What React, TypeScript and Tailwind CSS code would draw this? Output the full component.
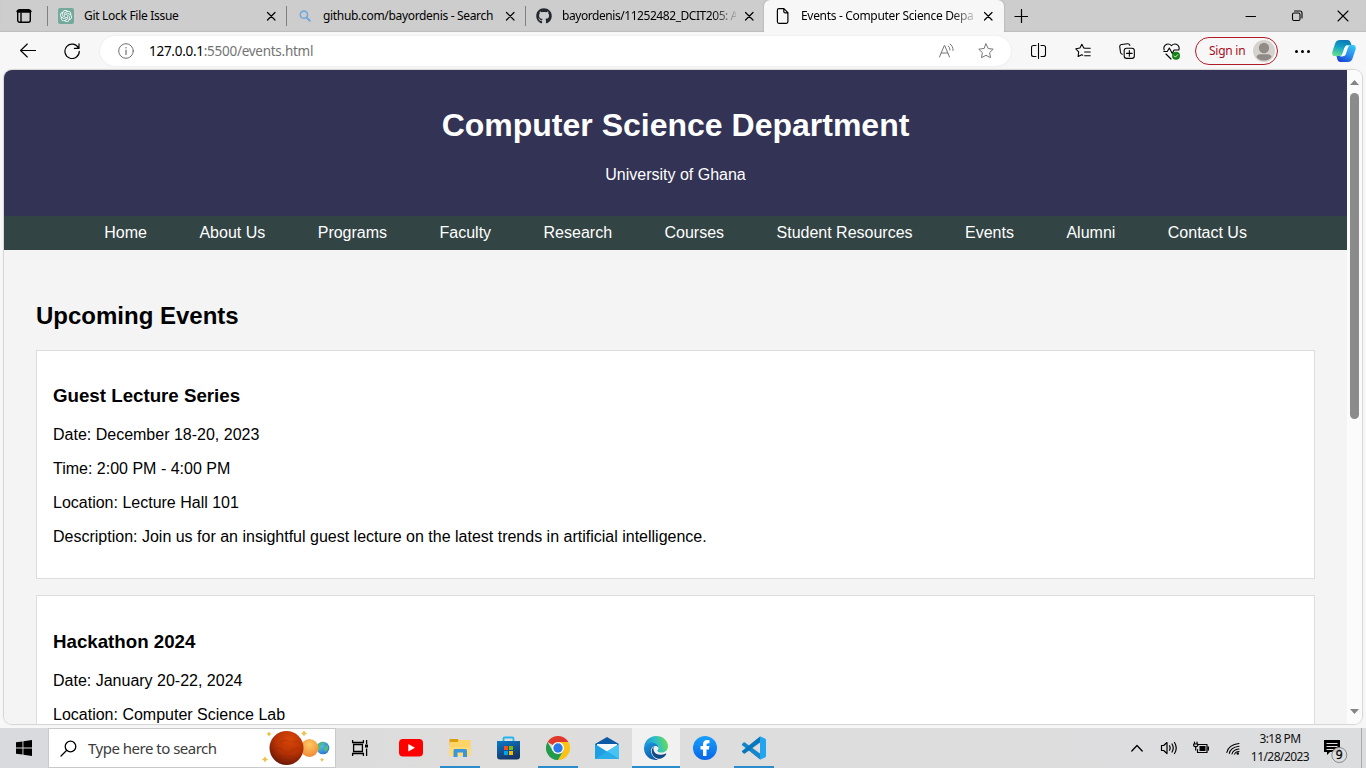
import type { ReactNode } from "react";
import { SiOpenai } from "react-icons/si";
import { FaGithub } from "react-icons/fa";

const links = ["Home", "About Us", "Programs", "Faculty", "Research", "Courses", "Student Resources", "Events", "Alumni", "Contact Us"];

type EventItem = { title: string; lines: string[] };
const events: EventItem[] = [
  {
    title: "Guest Lecture Series",
    lines: [
      "Date: December 18-20, 2023",
      "Time: 2:00 PM - 4:00 PM",
      "Location: Lecture Hall 101",
      "Description: Join us for an insightful guest lecture on the latest trends in artificial intelligence.",
    ],
  },
  {
    title: "Hackathon 2024",
    lines: ["Date: January 20-22, 2024", "Location: Computer Science Lab"],
  },
];

function Icon({ size = 16, w = 1, children, box }: { size?: number; w?: number; children: ReactNode; box?: string }) {
  return (
    <svg width={size} height={size} viewBox={box ?? `0 0 ${size} ${size}`} fill="none" stroke="currentColor" strokeWidth={w} strokeLinecap="round" strokeLinejoin="round" className="block shrink-0">
      {children}
    </svg>
  );
}

function Close() {
  return (
    <Icon size={10} w={1.2}>
      <path d="M1.500 1.500l7.500 7.500M9 1.500l-7.500 7.500" />
    </Icon>
  );
}

function Tab({ icon, title, active, fade, tracking }: { icon: ReactNode; title: string; active?: boolean; fade?: boolean; tracking: string }) {
  return (
    <div className={`flex h-8 shrink-0 items-center ${active ? "w-60 rounded-t-md bg-[#f7f7f7] pl-[11px] pr-[11px] shadow-[0_0_2px_#999]" : "w-[238px] pl-[10px] pr-[10px]"}`}>
      <div className="flex w-4 shrink-0 justify-center">{icon}</div>
      <div className={`ml-[10px] w-[174px] whitespace-nowrap text-[12px] leading-[18px] ${tracking} ${fade ? "[mask-image:linear-gradient(to_right,black_150px,transparent_178px)]" : ""}`}>{title}</div>
      <div className="ml-auto">
        <Close />
      </div>
    </div>
  );
}

const Sep = () => <div className="h-5 w-px shrink-0 bg-[#808080]" />;

function TabStrip() {
  return (
    <div className="flex h-8 items-center bg-[#cdcdcd] shadow-[inset_0_-1px_1px_#bdbdbd]">
      <div className="flex w-[47px] shrink-0 justify-center">
        <Icon size={16} w={1.4}>
          <rect x="1.7" y="1.7" width="12.6" height="12.6" rx="2" />
          <path d="M2 3.2h12" strokeWidth="3" />
          <path d="M5 5v9" />
        </Icon>
      </div>
      <Sep />
      <Tab
        title="Git Lock File Issue"
        tracking="tracking-[-0.3px]"
        icon={
          <div className="flex size-4 items-center justify-center rounded-[2px] bg-[#74aa9c]">
            <SiOpenai size={12} color="white" />
          </div>
        }
      />
      <Sep />
      <Tab
        title="github.com/bayordenis - Search"
        tracking="tracking-[-0.32px]"
        icon={
          <Icon size={16} w={1.6}>
            <g stroke="#72a8dc">
              <circle cx="6.9" cy="6.7" r="3.6" />
              <path d="M9.6 9.5l3.2 3.2" strokeWidth="2" />
            </g>
          </Icon>
        }
      />
      <Sep />
      <Tab title="bayordenis/11252482_DCIT205: A" fade tracking="tracking-[-0.44px]" icon={<FaGithub size={16} color="#24292f" />} />
      <Tab
        active
        fade
        title="Events - Computer Science Depa"
        tracking="tracking-[-0.32px]"
        icon={
          <Icon size={16} w={1.2}>
            <path d="M3.900.7h5l4 4v9.100q0 1.500-1.500 1.500H3.900q-1.500 0-1.500-1.500V2.200Q2.400.7 3.900.7zM8.800.9v2.500q0 1.500 1.500 1.500h2.400" />
          </Icon>
        }
      />
      <div className="flex w-[34px] justify-center">
        <Icon size={14} w={1.2}>
          <path d="M7.500.5v13.500M1 7.500h13" />
        </Icon>
      </div>
      <div className="ml-auto flex">
        <div className="flex w-[46px] justify-center">
          <Icon size={12}>
            <path d="M1 6.500h9.500" />
          </Icon>
        </div>
        <div className="flex w-[46px] justify-center">
          <Icon size={12} w={1.1}>
            <rect x="1.500" y="3" width="7.500" height="7.500" rx="1.500" />
            <path d="M3.500 1h5.500q2 0 2 2v5" />
          </Icon>
        </div>
        <div className="flex w-[46px] justify-center">
          <Icon size={12} w={1.1}>
            <path d="M1 1l10 10M11 1L1 11" />
          </Icon>
        </div>
      </div>
    </div>
  );
}

const star = "M8 .9l2.200 4.600 5 .7-3.600 3.500.9 5L8 12.300l-4.500 2.400.9-5L.8 6.200l5-.7z";

function Slot({ children }: { children: ReactNode }) {
  return <div className="flex w-11 shrink-0 justify-center">{children}</div>;
}

function Toolbar() {
  return (
    <div className="flex h-[38px] items-center bg-[#f7f7f7] pl-[6px]">
      <Slot>
        <Icon size={16} w={1.1}>
          <path d="M15.500 7.500H.8M7.300 1l-6.700 6.500 6.700 6.500" />
        </Icon>
      </Slot>
      <Slot>
        <Icon size={16} w={1.2}>
          <path d="M14.600 5.200A7.200 7.200 0 1 0 15.300 8.300M15 .8v4.600h-4.600" />
        </Icon>
      </Slot>
      <div className="ml-[6px] flex h-[30px] w-[911px] shrink-0 items-center rounded-full bg-white pl-[18px] pr-[17px] shadow-[0_0_2px_#e0e0e0]">
        <span className="text-[#707070]">
          <Icon size={16}>
            <circle cx="8" cy="8" r="7.300" />
            <path d="M8 7v4.500" strokeWidth="1.200" />
            <circle cx="8" cy="4.800" r=".7" fill="currentColor" stroke="none" />
          </Icon>
        </span>
        <div className="ml-[15px] whitespace-nowrap text-[13.500px] tracking-[-0.27px] text-[#737373]">
          <span className="text-black">127.0.0.1</span>:5500/events.html
        </div>
        <div className="ml-auto flex items-center gap-6 text-[#757575]">
          <Icon size={16}>
            <path d="M1.500 14L6.300 2.500h.4L11.500 14M3.200 10h6.600M10.200 3q2 1.400 1.800 4M12 1q3.400 2.200 3 6.500" />
          </Icon>
          <Icon size={16}>
            <path d={star} />
          </Icon>
        </div>
      </div>
      <div className="w-[6px] shrink-0" />
      <Slot>
        <Icon size={16} w={1.1}>
          <path d="M5 2.500H2.500q-2 0-2 2v7q0 2 2 2H5M10 2.500h2.500q2 0 2 2v7q0 2-2 2H10M7.500.5v15" />
        </Icon>
      </Slot>
      <Slot>
        <Icon size={16} w={1.15} box="0 0 17 17">
          <path d="M10.500 5.500L9.300 5.200 7.300 1.300 5.200 5.300.9 6.200l3 3.200-.6 5 3.900-2 1 .5M10.500 5.500h5.700M10.200 9.500h6M10.200 13.500h6" />
        </Icon>
      </Slot>
      <Slot>
        <Icon size={16} w={1.15} box="0 0 17 17">
          <rect x="5.500" y="5.500" width="10.800" height="10.800" rx="2.500" />
          <path d="M11 8v6M8 11h6M3.500 12Q1.700 11.500 1.500 9.500L.8 4q-.2-2 1.800-2.400L9 .8q2-.2 2.500 1.800" />
        </Icon>
      </Slot>
      <Slot>
        <Icon size={17} w={1.100}>
          <path d="M1.200 7Q.2 4 2.200 2.200q3.200-2.600 6.300.4 3.200-3 6.300-.4 2 2 1 4.800M.8 8.500h3.500l2-3.500 3 5.500 1.700-3.500h4.500M3 11l5 5" />
          <circle cx="13" cy="12.800" r="4" fill="#138213" stroke="none" />
          <path d="M11.200 12.900l1.200 1.200 2.300-2.400" stroke="white" strokeWidth=".9" />
        </Icon>
      </Slot>
      <div className="ml-[2px] flex h-7 w-[83px] shrink-0 items-center justify-between rounded-full border border-[#b11c28] pl-[13px] pr-[2px] text-[#a80f1a]">
        <span className="whitespace-nowrap text-[12px] tracking-[-0.25px]">Sign in</span>
        <svg width="22" height="22" viewBox="0 0 22 22">
          <circle cx="11" cy="11" r="11" fill="#d5d2ce" />
          <circle cx="11" cy="8" r="5.200" fill="#918b87" />
          <path d="M3.300 17q1-2.700 3.500-2.700h8.400q2.500 0 3.500 2.700a10 10 0 0 1-15.400 0z" fill="#918b87" />
        </svg>
      </div>
      <div className="ml-[2px] flex w-11 shrink-0 items-center justify-center gap-[3px]">
        <i className="size-[3px] rounded-full bg-black" />
        <i className="size-[3px] rounded-full bg-black" />
        <i className="size-[3px] rounded-full bg-black" />
      </div>
      <div className="flex w-10 shrink-0 justify-center">
        <svg width="24" height="24" viewBox="0 0 24 24">
          <defs>
            <linearGradient id="cp1" x1="0.600" y1="0" x2="0.300" y2="1">
              <stop offset="0" stopColor="#0a78b4" />
              <stop offset=".45" stopColor="#12a3c8" />
              <stop offset="1" stopColor="#63dd8e" />
            </linearGradient>
            <linearGradient id="cp2" x1="0.800" y1="0" x2="0.200" y2="1">
              <stop offset="0" stopColor="#35c5f4" />
              <stop offset=".5" stopColor="#2b8cee" />
              <stop offset="1" stopColor="#1440d4" />
            </linearGradient>
          </defs>
          <path d="M8 1h7.500q2.200 0 3 2.300L19.500 6h-4q-1.700 0-2.300 2l-2.500 6.500Q10 17 7.500 17H3Q-.5 17 .4 12.500L3.300 4Q4.500 1 8 1z" fill="url(#cp1)" />
          <path d="M16 23H8.500q-2.200 0-3-2.300L4.500 17h4q2 0 2.700-2.500l2-6.500q.6-2 2.300-2H21q3.500.2 2.600 4.500L20.700 19q-1.200 4-4.700 4z" fill="url(#cp2)" />
          <path d="M14.500 6.500h3.400q-1.500.8-2 2.500l-2.200 6.500Q13 17.500 8 17.500q1.900-.7 2.500-3l1.800-5.500q.6-2 2.200-2.500z" fill="#f5fbff" />
        </svg>
      </div>
    </div>
  );
}

function Scrollbar() {
  return (
    <div className="flex w-[15px] shrink-0 flex-col items-center bg-[#fbfbfb]">
      <svg width="9" height="5" viewBox="0 0 9 5" className="mt-[10px]">
        <path d="M4.500 0L9 5H0z" fill="#858585" />
      </svg>
      <div className="mt-2 h-[326px] w-[9px] rounded-full bg-[#8b8b8b]" />
      <svg width="9" height="5" viewBox="0 0 9 5" className="mb-[10px] mt-auto">
        <path d="M4.500 5L9 0H0z" fill="#858585" />
      </svg>
    </div>
  );
}

function Page() {
  return (
    <div className="flex-1 overflow-hidden bg-[#f4f4f4] font-['Liberation_Sans',Arial,sans-serif] text-[16px] leading-[18px] text-black">
      <header className="h-[145.880px] bg-[#333355] pt-[37.440px] text-center text-white">
        <h1 className="text-[32px] font-bold leading-[37px]">Computer Science Department</h1>
        <p className="mt-[21.440px]">University of Ghana</p>
      </header>
      <nav className="flex h-[34px] items-center justify-between bg-[#334444] pl-[100.300px] pr-[100px] text-white">
        {links.map((l) => (
          <a key={l}>{l}</a>
        ))}
      </nav>
      <main className="px-8 pt-[51.920px]">
        <h2 className="mb-[19.920px] text-[24px] font-bold leading-7">Upcoming Events</h2>
        {events.map((e) => (
          <section key={e.title} className="mb-4 border border-[#dddddd] bg-white px-4 pb-8 pt-[34.720px]">
            <h3 className="mb-[18.720px] text-[18.720px] font-bold leading-[22px]">{e.title}</h3>
            <div className="flex flex-col gap-4">
              {e.lines.map((t) => (
                <p key={t}>{t}</p>
              ))}
            </div>
          </section>
        ))}
      </main>
    </div>
  );
}

function Task({ children, line, active }: { children: ReactNode; line?: boolean; active?: boolean }) {
  return (
    <div className={`flex w-12 shrink-0 flex-col items-center ${active ? "bg-[#f1f1f2]" : ""}`}>
      <div className="flex flex-1 items-center justify-center">{children}</div>
      <div className={`-mt-[2px] h-[2px] ${active ? "w-12" : "w-10"} ${line ? "bg-[#2a8ccb]" : ""}`} />
    </div>
  );
}

function Planets() {
  return (
    <svg width="70" height="36" viewBox="0 0 70 36" className="shrink-0">
      <defs>
        <radialGradient id="mars" cx=".6" cy=".25" r=".8">
          <stop offset="0" stopColor="#d94708" />
          <stop offset=".55" stopColor="#b53205" />
          <stop offset="1" stopColor="#641506" />
        </radialGradient>
        <radialGradient id="venus" cx=".5" cy=".3" r=".8">
          <stop offset="0" stopColor="#ffc862" />
          <stop offset="1" stopColor="#ec8130" />
        </radialGradient>
        <radialGradient id="earth" cx=".3" cy=".3" r=".8">
          <stop offset="0" stopColor="#55c6ef" />
          <stop offset="1" stopColor="#2a74cc" />
        </radialGradient>
      </defs>
      <circle cx="61" cy="18" r="6.300" fill="url(#earth)" />
      <path d="M56 14q3-3 6-2l-1 3-3 1 1 3-3 2q-2-4 0-7zM62 17l4-2q1 4-2 7l-2-2z" fill="#50b984" />
      <circle cx="47.500" cy="18" r="9" fill="url(#venus)" />
      <circle cx="24.500" cy="18" r="17" fill="url(#mars)" />
      <path d="M18 13q3-4 8-2t10 0M11 20q6-4 9 0t7 2 9-4M16 28q8-5 14-1" stroke="#8f2508" strokeOpacity=".25" strokeWidth="1.200" fill="none" />
      <g fill="#edc24b">
        <path d="M7 1.500l1 1.500 1.500 1L8 5 7 6.500 6 5 4.500 4 6 3zM42 .3l1.100 2 2 1.100-2 1.100-1.100 2-1.100-2-2-1.100 2-1.100zM3 26.300l1.100 2 2 1.100-2 1.100-1.100 2-1.100-2-2-1.100 2-1.100zM60 27.500l.8 1.500 1.500.8-1.500.8-.8 1.500-.8-1.500-1.500-.8 1.500-.8z" />
      </g>
    </svg>
  );
}

function Taskbar() {
  return (
    <div className="flex h-10 bg-gradient-to-r from-[#d8dadd] via-[#dedddc] via-35% to-[#dcdddf]">
      <div className="flex w-12 shrink-0 items-center justify-center">
        <svg width="16" height="16" viewBox="0 0 16 16">
          <path d="M0 2.300L6.500 1.400V7.500H0zM7.400 1.200L16 0V7.500H7.400zM0 8.500h6.500v6.100L0 13.700zM7.400 8.500H16V16l-8.600-1.200z" />
        </svg>
      </div>
      <div className="flex w-[288px] shrink-0 items-center border border-[#c8c9ca] bg-white pl-[11px] pr-[3px]">
        <Icon size={17} w={1.300}>
          <circle cx="10.500" cy="6.500" r="5.300" />
          <path d="M6.500 10.500L1 16" />
        </Icon>
        <span className="ml-[11px] flex-1 whitespace-nowrap text-[15px] tracking-[-0.5px] text-[#3c3c3c]">Type here to search</span>
        <Planets />
      </div>
      <div className="flex gap-px">
        <Task>
          <Icon size={18} w={1.300} box="0 0 18 18">
            <g strokeLinecap="butt" strokeLinejoin="miter">
              <path d="M1.600 1v2.500h10.800V1M1.600 17v-2.500h10.800V17M2.600 5.500h8.800v7H2.600zM15.600 1v4M15.600 9.500V17" />
              <path d="M14 5.500h3v3h-3z" fill="currentColor" stroke="none" />
            </g>
          </Icon>
        </Task>
        <div className="w-px" />
        <Task>
          <svg width="24" height="18" viewBox="0 0 24 18">
            <rect width="24" height="17.500" rx="4" fill="#ff0000" />
            <path d="M9.300 5l6.700 3.700-6.700 3.700z" fill="white" />
          </svg>
        </Task>
        <Task line>
          <svg width="22" height="18" viewBox="0 0 22 18">
            <path d="M.5 0h8l1.500 1.500V6H.5z" fill="#dd9c0a" />
            <path d="M.5 3h8L10 1h11.500v16H.5z" fill="#ffd466" />
            <path d="M.5 8h21v9H.5z" fill="#ffda75" />
            <path d="M4.500 18v-6.500q0-1.500 1.500-1.500h10.500q1.500 0 1.500 1.500V18H14v-4.500H8.500V18z" fill="#3a96dc" />
          </svg>
        </Task>
        <Task>
          <svg width="24" height="24" viewBox="0 0 24 24">
            <defs>
              <linearGradient id="store" x1="0" y1="0" x2=".4" y2="1">
                <stop stopColor="#087acb" />
                <stop offset="1" stopColor="#173866" />
              </linearGradient>
            </defs>
            <path d="M6.500 6V2.500q0-1 1-1h8q1 0 1 1V6" fill="none" stroke="#23b6ef" strokeWidth="1.800" />
            <path d="M0 5h23v15.500q0 3-3 3H3q-3 0-3-3z" fill="url(#store)" />
            <path d="M7 10h4v4H7z" fill="#f25022" />
            <path d="M12 10h4v4h-4z" fill="#7fba00" />
            <path d="M7 15h4v4H7z" fill="#00a4ef" />
            <path d="M12 15h4v4h-4z" fill="#ffb900" />
          </svg>
        </Task>
        <Task line>
          <svg width="24" height="24" viewBox="0 0 24 24">
            <path d="M12 12L1.600 6A12 12 0 0 1 22.400 6z" fill="#e0392b" />
            <path d="M12 12L22.400 6A12 12 0 0 1 12 24L17.200 15z" fill="#fbc116" />
            <path d="M12 12l5.200 3L12 24A12 12 0 0 1 1.600 6L6.800 15z" fill="#249a4c" />
            <path d="M12 6h10.400L17 15z" fill="#fbc116" />
            <circle cx="12" cy="12" r="6" fill="white" />
            <circle cx="12" cy="12" r="4.700" fill="#2c7aea" />
          </svg>
        </Task>
        <Task>
          <svg width="24" height="24" viewBox="0 0 24 24">
            <path d="M0 8l12-7 12 7v4H0z" fill="#0c5aa6" />
            <path d="M2 8h20v8H2z" fill="#f5f9fd" />
            <path d="M0 8l12 7.500L24 8v15H0z" fill="#1f9fe0" />
            <path d="M24 8v15L12 15.500z" fill="#45c4f3" />
            <path d="M0 23l12-7.500L24 23z" fill="#29aee9" />
          </svg>
        </Task>
        <Task line active>
          <svg width="24" height="24" viewBox="0 0 24 24">
            <defs>
              <linearGradient id="eg1" x1="0" y1=".5" x2="1" y2=".3">
                <stop stopColor="#1b92d6" />
                <stop offset=".5" stopColor="#2cbfcb" />
                <stop offset="1" stopColor="#6bde4b" />
              </linearGradient>
              <linearGradient id="eg2" x1="0" y1="0" x2=".5" y2="1">
                <stop stopColor="#1d9be2" />
                <stop offset="1" stopColor="#0b5ba7" />
              </linearGradient>
            </defs>
            <path d="M0 11.500C.5 5 5.500 0 12 0c7.500 0 12 5 12 10.200 0 4-3 6.300-6.500 6.300-3 0-4.200-1-4.200-1.800 0-.8 1.200-1 1.200-3C14.500 9.500 12 7.500 8.500 7.500 4.500 7.500 1 9 0 11.500z" fill="url(#eg1)" />
            <path d="M0 11.500C1 8.500 4.500 6.500 8.500 6.800c3.500.2 6 2.500 6 5-1-1.500-2.500-2-4-1.600-2.500.6-4 3-3.300 6.300.8 3.500 3.300 6.300 7 7.200C6 25.500-.5 19 0 11.500z" fill="url(#eg2)" />
            <path d="M10 10.500c-2 1.500-2.700 4-2 6.500 1.200 4.200 5 6.500 9 5.500 2.400-.8 4.300-2.300 5.300-4.200.3-.7-.3-1-1-.6-4.500 2.200-9.500 1-11.200-2.200-.8-1.600-.9-3.300-.1-5z" fill="#104a86" />
          </svg>
        </Task>
        <Task>
          <svg width="24" height="24" viewBox="0 0 24 24">
            <defs>
              <linearGradient id="fb" x1="0" y1="0" x2="0" y2="1">
                <stop stopColor="#18a0fb" />
                <stop offset="1" stopColor="#0866e8" />
              </linearGradient>
            </defs>
            <circle cx="12" cy="12" r="12" fill="url(#fb)" />
            <path d="M10 20v-6.500H7.500V10H10V8.500C10 5.500 11.500 4 14 4q1.500 0 2.500.3v3h-1.400Q13.500 7.300 13.500 9v1h2.900l-.5 3.500h-2.400V20z" fill="white" />
          </svg>
        </Task>
        <Task line>
          <svg width="24" height="24" viewBox="0 0 24 24">
            <path d="M0 8l1.800-1.500q.5-.4 1.100 0L18 17.500v6L.2 9.200Q-.5 8.500 0 8z" fill="#1685cc" />
            <path d="M0 16l1.800 1.500q.5.400 1.100 0L18 6.500v-6L.2 14.800Q-.5 15.500 0 16z" fill="#0878bd" />
            <path d="M18 .2l5 2.400q1 .5 1 1.600v15.600q0 1.100-1 1.600l-5 2.400z" fill="#22a5f1" />
          </svg>
        </Task>
      </div>
      <div className="ml-auto flex items-center">
        <div className="flex w-8 justify-center">
          <Icon size={12} w={1.300}>
            <path d="M.8 9L6 3.500 11.200 9" />
          </Icon>
        </div>
        <div className="flex w-8 justify-center">
          <Icon size={18} w={1.200} box="0 0 18 18">
            <path d="M1.500 6.500v5h2.200L7 14.500v-11L3.700 6.500zM9.500 6.800q1.300 2.200 0 4.400M12 5q2.500 4 0 8M14.500 3.500q3.500 5.500 0 11" />
          </Icon>
        </div>
        <div className="flex w-8 justify-center">
          <Icon size={16} w={1.200} box="0 0 16 16">
            <path d="M5 4.500h9v8H4.500V9.500" />
            <path d="M6.500 6h6v5h-6zM14.500 6.500h1.500v4h-1.500z" fill="currentColor" stroke="none" />
            <path d="M1.500 2v2M4 2v2M.7 4h4v1.700q-.4 1-2 1t-2-1zM2.700 7v3" />
          </Icon>
        </div>
        <div className="flex w-8 justify-center">
          <Icon size={14} w={1.100}>
            <path d="M.8 11.500Q2.500 3.800 13 2.500M3.300 12.500Q4.500 6.500 13 5.300M6 13q1-4.300 7-5M8.700 13.200q.5-2.400 4.300-2.700" />
            <circle cx="11.800" cy="12.500" r="1.200" fill="currentColor" stroke="none" />
          </Icon>
        </div>
        <div className="w-[62px] text-center text-[12px] leading-[18px] tracking-[-0.55px] text-[#111]">
          <div>3:18 PM</div>
          <div>11/28/2023</div>
        </div>
        <div className="ml-[11px] flex w-[39px]">
          <svg width="28" height="30" viewBox="0 0 28 30">
            <path d="M2 7h16v12H8l-3 3v-3H2z" fill="#000" />
            <path d="M4.500 10.500h11M4.500 13.500h11M4.500 16.500h7" stroke="#dcdddf" />
            <circle cx="17.300" cy="22" r="7.500" fill="#dcdddf" fillOpacity=".9" stroke="#888" />
            <text x="17.300" y="26.300" fontSize="12" textAnchor="middle" fill="#000" stroke="#000" strokeWidth=".3">9</text>
          </svg>
        </div>
        <div className="h-10 w-[5px] border-l border-[#a9aaab]" />
      </div>
    </div>
  );
}

export default function App() {
  return (
    <div className="flex h-[768px] w-[1366px] flex-col overflow-hidden bg-[#f7f7f7] font-['Noto_Sans','Open_Sans',sans-serif] text-black">
      <TabStrip />
      <Toolbar />
      <div className="mx-1 mb-1 flex min-h-0 flex-1 overflow-hidden rounded-lg shadow-[0_0_1px_1px_#d4d4d4]">
        <Page />
        <Scrollbar />
      </div>
      <Taskbar />
    </div>
  );
}
